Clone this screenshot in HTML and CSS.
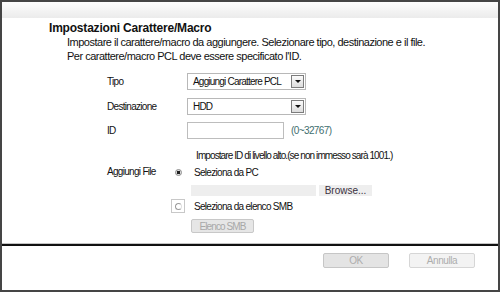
FILE: index.html
```html
<!DOCTYPE html>
<html lang="it">
  <head>
    <meta charset="UTF-8" />
    <title>Impostazioni Carattere/Macro</title>
    <link rel="stylesheet" href="styles.css">
  </head>
  <body>
    <div class="window">
      <div class="titlebar"></div>
      <div class="main">
        <h1 class="title">Impostazioni Carattere/Macro</h1>
        <p class="desc">
          Impostare il carattere/macro da aggiungere. Selezionare tipo, destinazione e il file.<br>
          Per carattere/macro PCL deve essere specificato l'ID.
        </p>

        <div class="form">
          <div class="row">
            <span class="label">Tipo</span>
            <div class="select"><span>Aggiungi Carattere PCL</span><span class="arrow"></span></div>
          </div>
          <div class="row">
            <span class="label">Destinazione</span>
            <div class="select"><span>HDD</span><span class="arrow"></span></div>
          </div>
          <div class="row">
            <span class="label">ID</span>
            <div class="input"></div>
            <span class="range">(0~32767)</span>
          </div>
          <p class="note">Impostare ID di livello alto.(se non immesso sarà 1001.)</p>

          <div class="file">
            <span class="label file-label">Aggiungi File</span>
            <div class="file-opts">
              <div class="radio-row">
                <span class="radio-slot"><span class="radio checked"></span></span>
                Seleziona da PC
              </div>
              <div class="path-row">
                <div class="path"></div>
                <button class="browse">Browse...</button>
              </div>
              <div class="radio-row">
                <span class="radio-slot focus"><span class="radio"></span></span>
                Seleziona da elenco SMB
              </div>
              <button class="smb-btn">Elenco SMB</button>
            </div>
          </div>
        </div>
      </div>

      <div class="footer">
        <button class="btn ok">OK</button>
        <button class="btn cancel">Annulla</button>
      </div>
    </div>
  </body>
</html>
```

FILE: styles.css
```css
body {
  margin: 0;
  font-family: 'Liberation Sans', Arial, sans-serif;
  font-size: 11px;
  color: #111;
  background: #fff;
}

.window {
  width: 500px;
  height: 292px;
  box-sizing: border-box;
  border: 2px solid #454545;
  display: flex;
  flex-direction: column;
}

.titlebar {
  height: 16px;
  background: linear-gradient(#fdfdfd, #ebebeb);
}

.main {
  height: 225px;
  padding-left: 47px;
  border-bottom: 1px solid #c4c4c4;
}

.title {
  margin: 3px 0 0;
  font-size: 12px;
  line-height: 14px;
  font-weight: bold;
  letter-spacing: -0.2px;
}

.desc {
  margin: 0 0 0 18px;
  line-height: 14px;
  letter-spacing: -0.5px;
}

.form {
  margin: 10px 0 0 58px;
  font-size: 10px;
  letter-spacing: -0.7px;
}

.row {
  display: flex;
  align-items: center;
  height: 17px;
  margin-bottom: 8px;
}

.row:nth-child(2) {
  margin-bottom: 7px;
}

.label {
  width: 80px;
  flex-shrink: 0;
}

.select {
  width: 119px;
  height: 17px;
  box-sizing: border-box;
  border: 1px solid #b8b8b8;
  display: flex;
  align-items: center;
  justify-content: space-between;
  padding: 0 1px 0 5px;
  white-space: nowrap;
  letter-spacing: -0.8px;
}

.arrow {
  width: 11px;
  height: 11px;
  border: 1px solid #7c7c7c;
  background: linear-gradient(#fbfbfb, #dcdcdc);
  position: relative;
}

.arrow::after {
  content: '';
  position: absolute;
  left: 3px;
  top: 4px;
  border-left: 3px solid transparent;
  border-right: 3px solid transparent;
  border-top: 3px solid #111;
}

.input {
  width: 97px;
  height: 17px;
  box-sizing: border-box;
  border: 1px solid #bdbdbd;
}

.range {
  margin-left: 7px;
  color: #3e6e6e;
  letter-spacing: -0.6px;
}

.note {
  margin: 10px 0 0 89px;
  line-height: 14px;
  letter-spacing: -0.9px;
}

.file {
  display: flex;
  margin-top: 2px;
}

.file-label {
  width: 64px;
  line-height: 14px;
}

.file-opts {
  display: flex;
  flex-direction: column;
  align-items: flex-start;
}

.radio-row {
  display: flex;
  align-items: center;
  gap: 9px;
  height: 14px;
}

.radio-slot {
  width: 14px;
  height: 14px;
  box-sizing: border-box;
  display: flex;
  align-items: center;
  justify-content: center;
}

.radio-slot.focus {
  border: 1px solid #c8c8c8;
}

.radio {
  width: 7px;
  height: 7px;
  box-sizing: border-box;
  border-radius: 50%;
  border: 1px solid;
  border-color: #9a9a9a #e0e0e0 #9a9a9a #9a9a9a;
}

.radio.checked {
  border-color: #8a8a8a;
  background: radial-gradient(circle, #222 0 1.5px, #ddd 2px);
}

.path-row {
  display: flex;
  gap: 3px;
  margin: 6px 0 0 20px;
  height: 11px;
}

.path {
  width: 125px;
  background: #eeeeee;
}

.browse {
  width: 53px;
  padding: 0;
  border: none;
  background: #eeeeee;
  font: inherit;
  line-height: 11px;
  color: #3a3040;
}

.path-row + .radio-row {
  margin-top: 3px;
}

.smb-btn {
  margin: 6px 0 0 20px;
  width: 63px;
  height: 14px;
  padding: 0;
  border: 1px solid #c8c8c8;
  border-radius: 2px;
  background: #e6e6e6;
  font: inherit;
  letter-spacing: -0.9px;
  color: #a8a8a8;
}

.footer {
  flex: 1;
  border-top: 2px solid #111;
  display: flex;
  justify-content: flex-end;
  align-items: flex-start;
  gap: 20px;
  padding: 7px 23px 0 0;
}

.btn {
  width: 66px;
  height: 15px;
  padding: 0;
  border-radius: 2px;
  font: inherit;
  font-size: 10px;
  letter-spacing: -0.4px;
  color: #adadad;
}

.ok {
  border: 1px solid #c6c6c6;
  background: #e4e4e4;
}

.cancel {
  border: 1px solid #d6d6d6;
  background: #f3f3f3;
}
```
